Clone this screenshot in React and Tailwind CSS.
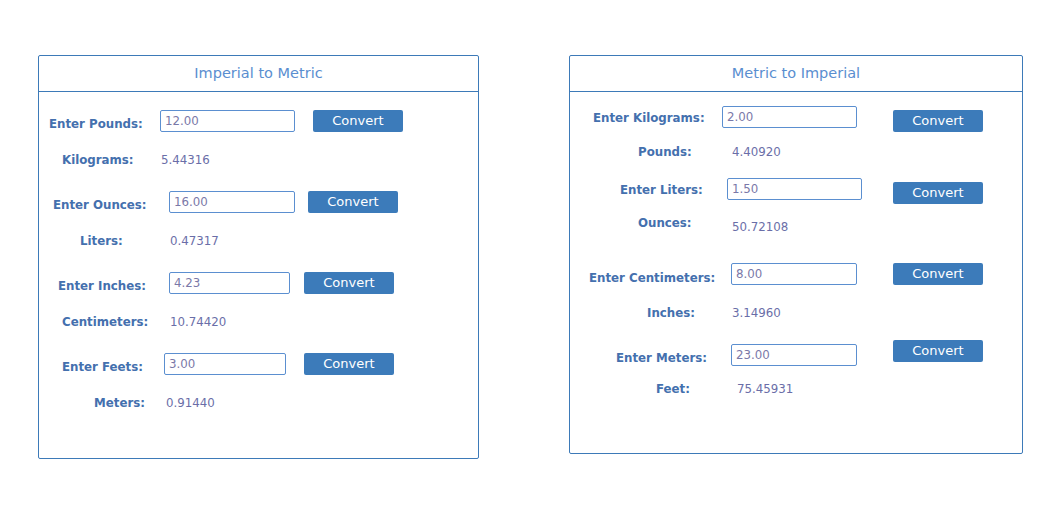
import React, { useState } from "react";

const leftRows = [
  {
    label: "Enter Pounds:", value: "12.00", pl: "pl-[10px]", box: "w-[121px]", input: "w-[135px]", btn: "ml-[18px]", mt: "mt-[18px]",
    result: "Kilograms:", out: "5.44316", rpl: "pl-[23px]", rbox: "w-[122px]",
  },
  {
    label: "Enter Ounces:", value: "16.00", pl: "pl-[14px]", box: "w-[130px]", input: "w-[126px]", btn: "ml-[13px]", mt: "mt-[22px]",
    result: "Liters:", out: "0.47317", rpl: "pl-[41px]", rbox: "w-[131px]",
  },
  {
    label: "Enter Inches:", value: "4.23", pl: "pl-[19px]", box: "w-[130px]", input: "w-[121px]", btn: "ml-[14px]", mt: "mt-[22px]",
    result: "Centimeters:", out: "10.74420", rpl: "pl-[23px]", rbox: "w-[131px]",
  },
  {
    label: "Enter Feets:", value: "3.00", pl: "pl-[23px]", box: "w-[125px]", input: "w-[122px]", btn: "ml-[18px]", mt: "mt-[22px]",
    result: "Meters:", out: "0.91440", rpl: "pl-[55px]", rbox: "w-[127px]",
  },
];

const labelCls = "font-['DejaVu_Sans',sans-serif] text-[11.8px] leading-[18px] font-bold text-[#4470ae] whitespace-nowrap";
const valueCls = "font-['DejaVu_Sans',sans-serif] text-[11.8px] leading-[18px] text-[#6a6ea8]";
const inputCls =
  "h-[22px] rounded-[2px] border border-[#5b8fd0] bg-white px-[4px] font-['DejaVu_Sans',sans-serif] text-[11.8px] text-[#7a78a8] outline-none";
const btnCls =
  "h-[22px] w-[90px] rounded-[2px] bg-[#3c7bba] font-['DejaVu_Sans',sans-serif] text-[13px] text-white";

const Field = ({ value, className }) => {
  const [v, setV] = useState(value);
  return <input className={`${inputCls} ${className}`} value={v} onChange={(e) => setV(e.target.value)} />;
};

const CardHeader = ({ title }) => (
  <div className="flex h-[36px] items-center justify-center border-b border-[#3d7ab8] font-['DejaVu_Sans',sans-serif] text-[14.5px] text-[#5a8ed0]">
    {title}
  </div>
);

const ResultRow = ({ label, out, box, pl, mt }) => (
  <div className={`flex h-[18px] items-start ${mt}`}>
    <div className={`${box} ${pl} shrink-0`}>
      <div className={labelCls}>{label}</div>
    </div>
    <div className={valueCls}>{out}</div>
  </div>
);

const ImperialCard = () => (
  <div className="h-[404px] w-[441px] shrink-0 rounded-[2px] border border-[#3d7ab8] bg-white">
    <CardHeader title="Imperial to Metric" />
    {leftRows.map((r) => (
      <div key={r.label}>
        <div className={`flex h-[22px] items-center ${r.mt}`}>
          <div className={`${r.box} ${r.pl} shrink-0 pt-[2px]`}>
            <span className={labelCls}>{r.label}</span>
          </div>
          <Field value={r.value} className={r.input} />
          <button className={`${btnCls} ${r.btn}`}>Convert</button>
        </div>
        <ResultRow label={r.result} out={r.out} box={r.rbox} pl={r.rpl} mt="mt-[19px]" />
      </div>
    ))}
  </div>
);

const MetricCard = () => (
  <div className="h-[399px] w-[454px] shrink-0 rounded-[2px] border border-[#3d7ab8] bg-white">
    <CardHeader title="Metric to Imperial" />

    {/* kilograms */}
    <div className="mt-[14px] flex h-[26px] items-start">
      <div className="flex h-[22px] w-[152px] shrink-0 items-center pl-[23px] pt-[2px]">
        <span className={labelCls}>Enter Kilograms:</span>
      </div>
      <Field value="2.00" className="w-[135px]" />
      <button className={`${btnCls} ml-[36px] mt-[4px]`}>Convert</button>
    </div>
    <ResultRow label="Pounds:" out="4.40920" box="w-[162px]" pl="pl-[68px]" mt="mt-[11px]" />

    {/* liters */}
    <div className="mt-[17px] flex h-[26px] items-start">
      <div className="flex h-[22px] w-[157px] shrink-0 items-center pl-[50px] pt-[2px]">
        <span className={labelCls}>Enter Liters:</span>
      </div>
      <Field value="1.50" className="w-[135px]" />
      <button className={`${btnCls} ml-[31px] mt-[4px]`}>Convert</button>
    </div>
    <div className="mt-[10px] flex h-[22px] items-start">
      <div className="w-[162px] shrink-0 pl-[68px]">
        <div className={labelCls}>Ounces:</div>
      </div>
      <div className={`${valueCls} mt-[4px]`}>50.72108</div>
    </div>

    {/* centimeters */}
    <div className="mt-[27px] flex h-[22px] items-center">
      <div className="w-[161px] shrink-0 pl-[19px] pt-[3px]">
        <span className={labelCls}>Enter Centimeters:</span>
      </div>
      <Field value="8.00" className="w-[126px]" />
      <button className={`${btnCls} ml-[36px]`}>Convert</button>
    </div>
    <ResultRow label="Inches:" out="3.14960" box="w-[162px]" pl="pl-[77px]" mt="mt-[19px]" />

    {/* meters */}
    <div className="mt-[18px] flex h-[26px] items-start">
      <div className="mt-[4px] flex h-[22px] w-[161px] shrink-0 items-end pl-[46px]">
        <span className={`${labelCls} translate-y-[1px]`}>Enter Meters:</span>
      </div>
      <Field value="23.00" className="mt-[4px] w-[126px]" />
      <button className={`${btnCls} ml-[36px]`}>Convert</button>
    </div>
    <ResultRow label="Feet:" out="75.45931" box="w-[167px]" pl="pl-[86px]" mt="mt-[14px]" />
  </div>
);

export default function App() {
  return (
    <div className="min-h-[505px] w-full bg-white">
      <div className="flex gap-[90px] pl-[38px] pt-[55px]">
        <ImperialCard />
        <MetricCard />
      </div>
    </div>
  );
}
